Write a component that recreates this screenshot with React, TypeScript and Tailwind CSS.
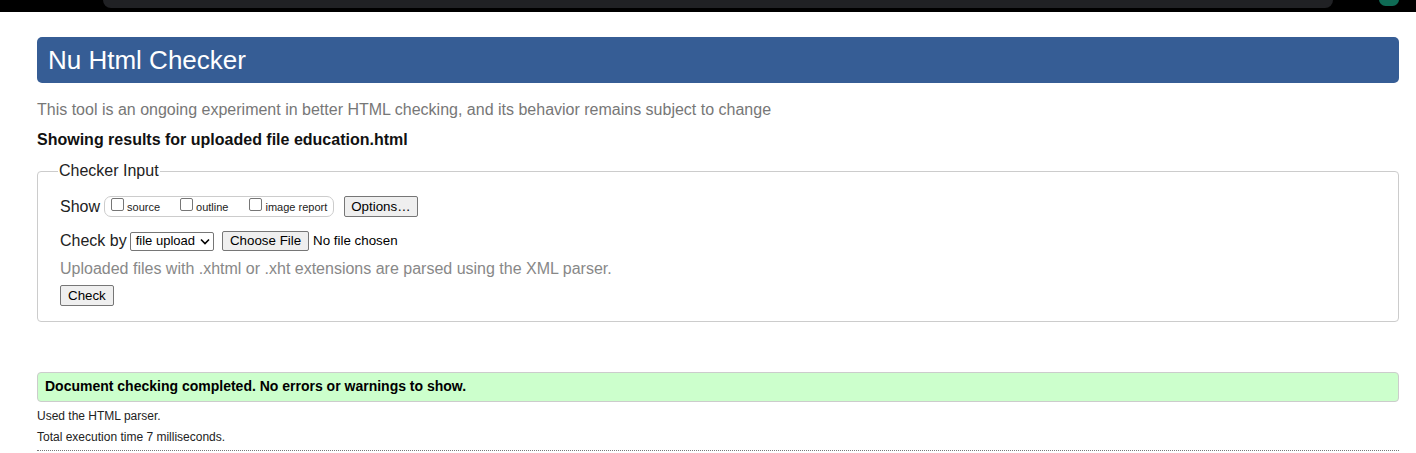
import React from "react";

function Checkbox() {
  return (
    <span className="inline-block w-[13px] h-[13px] border border-[#767676] rounded-[2px] bg-white mr-[3px] mb-[2px]" />
  );
}

export default function App() {
  return (
    <div className="w-[1416px] h-[453px] bg-white overflow-hidden relative font-['Liberation_Sans',Arial,sans-serif] text-[#222]">
      {/* browser chrome strip */}
      <div className="h-[12px] bg-black relative">
        <div className="absolute left-[103px] top-0 w-[1230px] h-[8px] bg-[#202124] rounded-b-[8px]" />
        <div className="absolute left-[1379px] top-[-7px] w-[20px] h-[13px] rounded-full bg-[#0f6b55]" />
      </div>

      <div className="ml-[37px] w-[1362px] pt-[25px]">
        <h1 className="h-[46px] bg-[#365d95] rounded-[5px] text-white text-[26px] leading-[46px] pl-[11px]">
          Nu Html Checker
        </h1>
        <p className="mt-[17px] text-[16px] leading-[20px] text-[#777]">
          This tool is an ongoing experiment in better HTML checking, and its behavior remains subject to change
        </p>
        <p className="mt-[10px] text-[16px] leading-[20px] font-bold text-[#111]">
          Showing results for uploaded file education.html
        </p>

        <fieldset className="mt-[11px] border border-[#ccc] rounded-[4px] pl-[22px] pr-[10px] pb-[14px] pt-[4px]">
          <legend className="text-[16px] leading-[20px] px-[1px] -ml-[2px] text-[#222]">Checker Input</legend>
          <div className="flex items-center h-[21px] mt-[11px]">
            <span className="text-[16px]">Show</span>
            <span className="ml-[4px] inline-flex items-baseline h-[21px] pt-[1px] border border-[#ccc] rounded-[7px] pl-[6px] pr-[6px] text-[11px]">
              <label className="inline-flex items-baseline"><Checkbox />source</label>
              <label className="inline-flex items-baseline ml-[20px]"><Checkbox />outline</label>
              <label className="inline-flex items-baseline ml-[21px]"><Checkbox />image report</label>
            </span>
            <button className="ml-[10px] h-[21px] px-[6px] text-[13.33px] border border-[#767676] rounded-[2px] bg-[#efefef] text-black leading-none">
              Options…
            </button>
          </div>
          <div className="flex items-center h-[20px] mt-[14px]">
            <span className="text-[16px]">Check by</span>
            <span className="ml-[3px] inline-flex items-center h-[19px] border border-[#767676] rounded-[2px] bg-white pl-[5px] pr-[3px] text-[13px] text-black">
              file upload
              <svg className="ml-[5px]" width="10" height="7" viewBox="0 0 10 7"><path d="M1 1.5 L5 5.5 L9 1.5" fill="none" stroke="#000" strokeWidth="1.6" /></svg>
            </span>
            <button className="ml-[8px] h-[20px] px-[7px] text-[13.33px] border border-[#767676] rounded-[2px] bg-[#efefef] text-black leading-none">
              Choose File
            </button>
            <span className="ml-[4px] text-[13.33px] text-black">No file chosen</span>
          </div>
          <p className="mt-[8px] text-[16px] leading-[20px] text-[#888]">
            Uploaded files with .xhtml or .xht extensions are parsed using the XML parser.
          </p>
          <button className="mt-[6px] h-[21px] px-[7px] text-[13.33px] border border-[#767676] rounded-[2px] bg-[#efefef] text-black leading-none">
            Check
          </button>
        </fieldset>

        <div className="mt-[50px] h-[30px] bg-[#ccffcc] border border-[#ccc] rounded-[4px] pl-[7px] flex items-center text-[14px] font-bold text-black">
          Document checking completed. No errors or warnings to show.
        </div>
        <p className="mt-[4px] text-[12px] leading-[20px] text-[#222]">Used the HTML parser.</p>
        <p className="mt-[1px] text-[12px] leading-[20px] text-[#222]">Total execution time 7 milliseconds.</p>
        <div className="mt-[3px] border-t border-dotted border-[#777]" />
      </div>
    </div>
  );
}
